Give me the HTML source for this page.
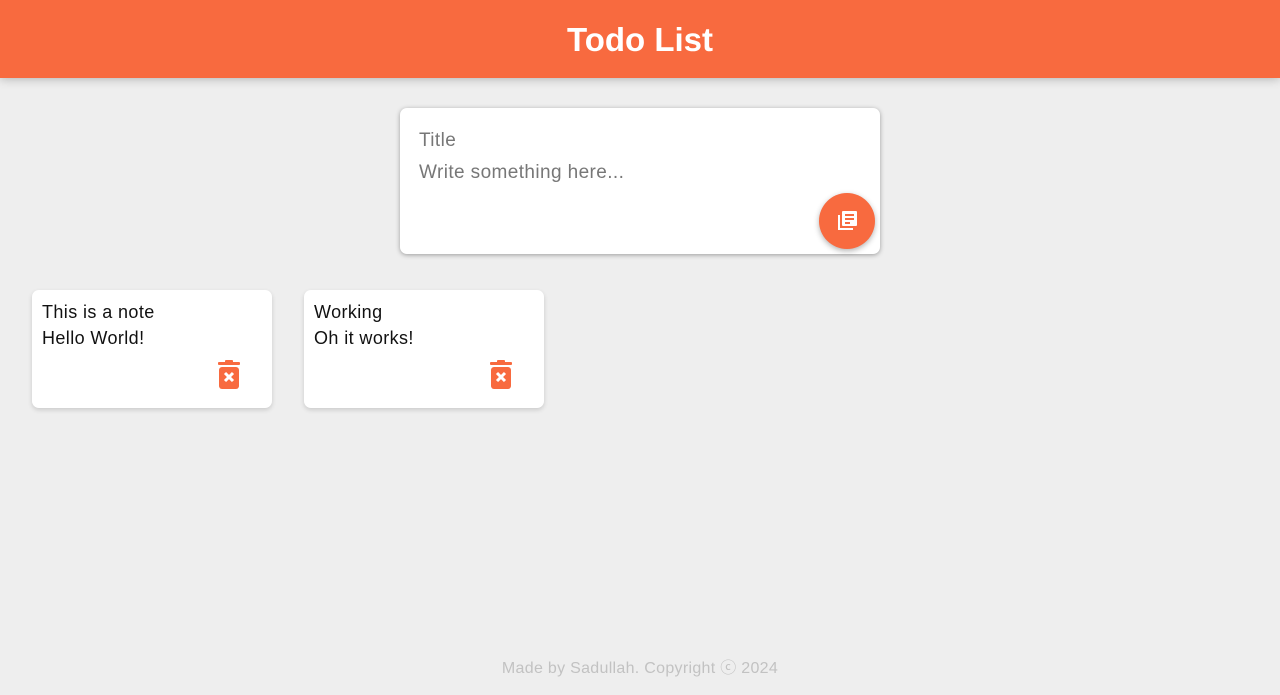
<!DOCTYPE html>
<html><head><meta charset="utf-8"><style>
*{box-sizing:border-box;margin:0;padding:0}
html,body{width:1280px;height:695px;overflow:hidden}
body{background:#eeeeee;font-family:"Liberation Sans",sans-serif;position:relative}
header{background:#f86a3f;height:78px;box-shadow:0 0 10px rgba(0,0,0,.3);text-align:center}
header h1{color:#fff;font-size:33px;line-height:80px;font-weight:bold}
.create{position:absolute;left:400px;top:108px;width:480px;height:146px;background:#fff;border-radius:7px;box-shadow:0 1px 5px rgba(0,0,0,.35)}
.ph{color:#777;font-size:19px;position:absolute;left:19px;letter-spacing:0.4px}
.fab{position:absolute;left:419px;top:85px;width:56px;height:56px;border-radius:50%;background:#f86a3f;box-shadow:0 2px 6px rgba(0,0,0,.3)}
.fab svg{position:absolute;left:17px;top:17px}
.note{position:absolute;top:290px;width:240px;height:118px;background:#fff;border-radius:7px;box-shadow:0 2px 5px rgba(0,0,0,.15)}
.note h2,.note p{position:absolute;left:10px;font-size:18px;font-weight:normal;color:#111;letter-spacing:0.4px}
.note h2{top:12px}.note p{top:38px}
.note svg{position:absolute;left:184px;top:70px}
footer{position:absolute;top:654px;width:100%;text-align:center;color:#c2c2c2;font-size:16px;letter-spacing:0.3px}
</style></head><body>
<header><h1>Todo List</h1></header>
<div class="create">
<div class="ph" style="top:22px">Title</div>
<div class="ph" style="top:54px">Write something here...</div>
<div class="fab"><svg width="22" height="22" viewBox="0 0 22 22"><path d="M2 5v15h15v-2H4V5z" fill="#fff"/><rect x="6" y="1" width="15" height="15" rx="1" fill="#fff"/><rect x="9" y="4" width="9" height="2" fill="#f86a3f"/><rect x="9" y="8" width="9" height="2" fill="#f86a3f"/><rect x="9" y="12" width="5" height="2" fill="#f86a3f"/></svg></div>
</div>
<div class="note" style="left:32px"><h2>This is a note</h2><p>Hello World!</p>
<svg width="26" height="30" viewBox="0 0 26 30"><rect x="2" y="2" width="22" height="3" rx="1" fill="#f86a3f"/><rect x="9" y="0" width="8" height="3" rx="1" fill="#f86a3f"/><rect x="3" y="7" width="20" height="22" rx="3" fill="#f86a3f"/><path d="M9 13l8 8M17 13l-8 8" stroke="#fff" stroke-width="3"/></svg></div>
<div class="note" style="left:304px"><h2>Working</h2><p>Oh it works!</p>
<svg width="26" height="30" viewBox="0 0 26 30"><rect x="2" y="2" width="22" height="3" rx="1" fill="#f86a3f"/><rect x="9" y="0" width="8" height="3" rx="1" fill="#f86a3f"/><rect x="3" y="7" width="20" height="22" rx="3" fill="#f86a3f"/><path d="M9 13l8 8M17 13l-8 8" stroke="#fff" stroke-width="3"/></svg></div>
<footer>Made by Sadullah. Copyright ⓒ 2024</footer>
</body></html>
